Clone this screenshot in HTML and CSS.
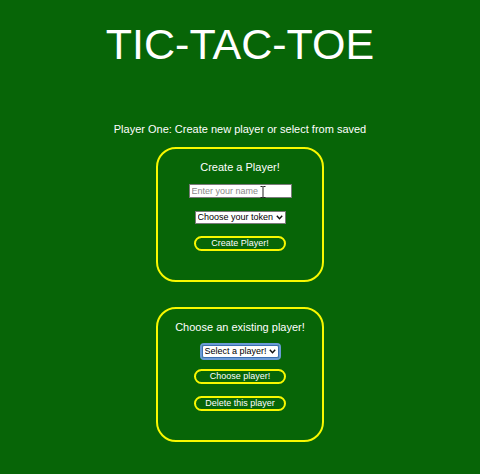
FILE: index.html
```html
<!DOCTYPE html>
<html>
<head>
<meta charset="utf-8">
<link rel="stylesheet" href="styles.css">
</head>
<body>
<main class="page">
  <h1 class="title">TIC-TAC-TOE</h1>
  <p class="prompt">Player One: Create new player or select from saved</p>

  <section class="panel panel-create">
    <h2 class="panel-title">Create a Player!</h2>
    <span class="field">
      <input class="name-input" type="text" placeholder="Enter your name">
      <svg class="ibeam" width="6" height="12" viewBox="0 0 6 12"><path d="M0.5 0.5h2l0.5 0.5l0.5-0.5h2M3 1v10M0.5 11.5h2l0.5-0.5l0.5 0.5h2" fill="none" stroke="#222" stroke-width="1"/></svg>
    </span>
    <span class="select-wrap token-wrap">
      <select class="select"><option>Choose your token</option></select>
      <svg class="chev" width="7" height="5" viewBox="0 0 7 5"><path d="M0.8 0.8L3.5 3.8L6.2 0.8" fill="none" stroke="#111" stroke-width="1.4"/></svg>
    </span>
    <button class="pill-btn create-btn">Create Player!</button>
  </section>

  <section class="panel panel-choose">
    <h2 class="panel-title">Choose an existing player!</h2>
    <span class="select-wrap player-wrap">
      <select class="select focused"><option>Select a player!</option></select>
      <svg class="chev" width="7" height="5" viewBox="0 0 7 5"><path d="M0.8 0.8L3.5 3.8L6.2 0.8" fill="none" stroke="#111" stroke-width="1.4"/></svg>
    </span>
    <button class="pill-btn choose-btn">Choose player!</button>
    <button class="pill-btn delete-btn">Delete this player</button>
  </section>
</main>
</body>
</html>
```

FILE: styles.css
```css
html, body {
  margin: 0;
  padding: 0;
  background: #076507;
}

body {
  font-family: "Liberation Sans", Arial, sans-serif;
  color: #fff;
  width: 480px;
  height: 474px;
  overflow: hidden;
}

.page {
  display: flex;
  flex-direction: column;
  align-items: center;
}

.title {
  margin: 20px 0 0 0;
  font-size: 43px;
  font-weight: normal;
  line-height: 48px;
}

.prompt {
  margin: 55px 0 0 0;
  font-size: 11px;
  line-height: 13px;
}

.panel {
  box-sizing: border-box;
  width: 168px;
  border: 2px solid #f8f800;
  border-radius: 20px;
  display: flex;
  flex-direction: column;
  align-items: center;
}

.panel-create {
  margin-top: 11px;
  height: 135px;
  padding-top: 12px;
}

.panel-choose {
  margin-top: 25px;
  height: 135px;
  padding-top: 12px;
}

.panel-title {
  margin: 0;
  font-size: 11px;
  font-weight: normal;
  line-height: 13px;
}

.field {
  position: relative;
  display: block;
  margin-top: 10px;
  line-height: 0;
}

.name-input {
  box-sizing: border-box;
  width: 103px;
  height: 14px;
  margin: 0;
  padding: 0 2px;
  border: 1px solid #7a7a7a;
  border-radius: 0;
  background: #fff;
  font-family: "Liberation Sans", Arial, sans-serif;
  font-size: 9px;
  color: #000;
  outline: none;
}

.name-input::placeholder {
  color: #8a8a8a;
}

.ibeam {
  position: absolute;
  left: 71px;
  top: 2px;
}

.select-wrap {
  position: relative;
  display: block;
  line-height: 0;
}

.token-wrap {
  margin-top: 13px;
}

.player-wrap {
  margin-top: 11px;
}

.select {
  box-sizing: border-box;
  appearance: none;
  -webkit-appearance: none;
  height: 13px;
  margin: 0;
  padding: 0 10px 0 2px;
  border: 1px solid #7a7a7a;
  border-radius: 0;
  background: #fff;
  font-family: "Liberation Sans", Arial, sans-serif;
  font-size: 9px;
  line-height: 11px;
  color: #000;
}

.token-wrap .select {
  width: 91px;
}

.player-wrap .select {
  width: 77px;
}

.select.focused {
  border-color: #3a6fb0;
  border-radius: 2px;
  outline: 2px solid #6b9bd6;
  outline-offset: 0;
}

.chev {
  position: absolute;
  right: 3px;
  top: 4px;
}

.pill-btn {
  box-sizing: border-box;
  width: 92px;
  height: 15px;
  margin: 0;
  padding: 0;
  border: 2px solid #f8f800;
  border-radius: 8px;
  background: transparent;
  color: #fff;
  font-family: "Liberation Sans", Arial, sans-serif;
  font-size: 9px;
  line-height: 11px;
}

.create-btn {
  margin-top: 12px;
}

.choose-btn {
  margin-top: 11px;
}

.delete-btn {
  margin-top: 12px;
}
```
